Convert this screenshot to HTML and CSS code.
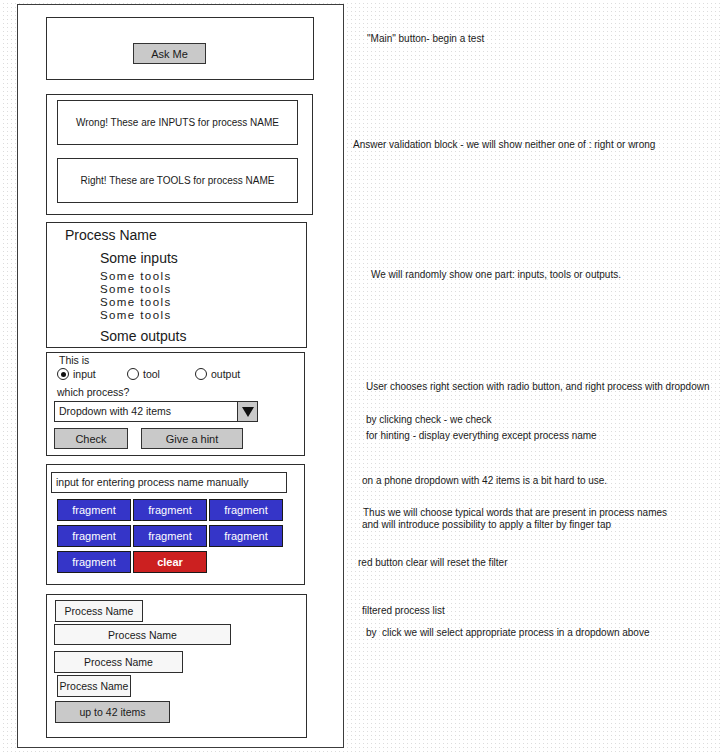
FILE: index.html
```html
<!DOCTYPE html>
<html>
<head>
<meta charset="utf-8">
<link rel="stylesheet" href="styles.css">
</head>
<body>
<div class="page">
  <div class="frame">
    <section class="box b1">
      <button class="btn gray ask">Ask Me</button>
    </section>

    <section class="box b2">
      <div class="msg">Wrong! These are INPUTS for process NAME</div>
      <div class="msg">Right! These are TOOLS for process NAME</div>
    </section>

    <section class="box b3">
      <div class="pname">Process Name</div>
      <div class="some s-in">Some inputs</div>
      <div class="some tools">Some tools<br>Some tools<br>Some tools<br>Some tools</div>
      <div class="some s-out">Some outputs</div>
    </section>

    <section class="box b4">
      <div class="this">This is</div>
      <div class="radios">
        <label class="radio r1"><span class="dot on"></span>input</label>
        <label class="radio r2"><span class="dot"></span>tool</label>
        <label class="radio"><span class="dot"></span>output</label>
      </div>
      <div class="which">which process?</div>
      <div class="select">
        <span class="sel-text">Dropdown with 42 items</span>
        <span class="sel-arrow"><svg width="12" height="10" viewBox="0 0 12 10"><path d="M0 0 L12 0 L6 10 Z" fill="#111"/></svg></span>
      </div>
      <div class="actions">
        <button class="btn gray check">Check</button>
        <button class="btn gray hint">Give a hint</button>
      </div>
    </section>

    <section class="box b5">
      <div class="textin">input for entering process name manually</div>
      <div class="frags">
        <button class="btn frag">fragment</button>
        <button class="btn frag">fragment</button>
        <button class="btn frag">fragment</button>
        <button class="btn frag">fragment</button>
        <button class="btn frag">fragment</button>
        <button class="btn frag">fragment</button>
        <button class="btn frag">fragment</button>
        <button class="btn clear">clear</button>
      </div>
    </section>

    <section class="box b6">
      <div class="item i1">Process Name</div>
      <div class="item i2">Process Name</div>
      <div class="item i3">Process Name</div>
      <div class="item i4">Process Name</div>
      <div class="item gray i5">up to 42 items</div>
    </section>
  </div>

  <div class="notes">
    <p class="note n1">"Main" button- begin a test</p>
    <p class="note n2">Answer validation block - we will show neither one of : right or wrong</p>
    <p class="note n3">We will randomly show one part: inputs, tools or outputs.</p>
    <p class="note n4">User chooses right section with radio button, and right process with dropdown</p>
    <p class="note n5">by clicking check - we check</p>
    <p class="note n6">for hinting - display everything except process name</p>
    <p class="note n7">on a phone dropdown with 42 items is a bit hard to use.</p>
    <p class="note n8">Thus we will choose typical words that are present in process names</p>
    <p class="note n9">and will introduce possibility to apply a filter by finger tap</p>
    <p class="note n10">red button clear will reset the filter</p>
    <p class="note n11">filtered process list</p>
    <p class="note n12">by&nbsp; click we will select appropriate process in a dropdown above</p>
  </div>
</div>
</body>
</html>
```

FILE: styles.css
```css
* { box-sizing: border-box; }
html, body {
  margin: 0;
  width: 720px;
  height: 753px;
  overflow: hidden;
}
body {
  font-family: "Liberation Sans", Arial, sans-serif;
  color: #1a1a1a;
  font-size: 11px;
  background-color: #dcdcdc;
  background-image:
    linear-gradient(90deg, #fff 0 3px, transparent 3px),
    linear-gradient(#fff 0 3px, transparent 3px);
  background-size: 4px 4px;
}
.page {
  display: flex;
  align-items: flex-start;
}
.frame {
  margin: 4px 0 0 17px;
  width: 327px;
  height: 744px;
  border: 1px solid #3c3c3c;
  background: #fff;
  display: flex;
  flex-direction: column;
  padding-left: 28px;
}
.box {
  border: 1px solid #2e2e2e;
  background: #fff;
}
.btn {
  font: inherit;
  color: #1a1a1a;
  border: 1px solid #333;
  padding: 0;
  display: flex;
  align-items: center;
  justify-content: center;
}
.gray { background: #c9c9c9; }

/* box 1 */
.b1 { margin-top: 12px; width: 268px; height: 63px; padding: 25px 0 0 86px; }
.ask { width: 73px; height: 21px; font-size: 11px; }

/* box 2 */
.b2 { margin-top: 14px; width: 267px; height: 121px; padding: 5px 0 0 10px; display: flex; flex-direction: column; gap: 13px; }
.msg {
  width: 241px; height: 45px;
  border: 1px solid #2e2e2e;
  display: flex; align-items: center; justify-content: center;
  font-size: 10px;
}

/* box 3 */
.b3 { margin-top: 7px; width: 261px; height: 126px; }
.pname { margin-top: 3px; padding-left: 18px; line-height: 18px; font-size: 14px; }
.some { padding-left: 53px; font-size: 14px; }
.s-in { margin-top: 5px; line-height: 18px; }
.tools { margin-top: 3px; line-height: 13px; font-size: 11.5px; letter-spacing: 1.4px; }
.s-out { margin-top: 5px; line-height: 18px; }

/* box 4 */
.b4 { margin-top: 4px; width: 259px; height: 104px; padding: 1px 0 0 7px; }
.this { padding-left: 5px; line-height: 13px; font-size: 10.5px; }
.radios { display: flex; align-items: center; height: 14px; padding-left: 3px; font-size: 10.5px; }
.radio { display: flex; align-items: center; gap: 4px; }
.r1 { width: 70px; }
.r2 { width: 68px; }
.dot {
  width: 12px; height: 12px;
  border: 1.5px solid #222;
  border-radius: 50%;
  display: flex; align-items: center; justify-content: center;
}
.dot.on::after {
  content: "";
  width: 5px; height: 5px;
  border-radius: 50%;
  background: #111;
}
.which { margin-top: 4px; padding-left: 3px; line-height: 14px; font-size: 10.5px; }
.select {
  margin-top: 2px;
  width: 204px; height: 21px;
  border: 1px solid #2e2e2e;
  display: flex;
}
.sel-text { flex: 1; padding-left: 4px; line-height: 19px; font-size: 10.5px; }
.sel-arrow {
  width: 20px;
  background: #c9c9c9;
  border-left: 1px solid #2e2e2e;
  display: flex; align-items: center; justify-content: center;
}
.actions { margin-top: 6px; display: flex; gap: 13px; }
.check { width: 74px; height: 21px; }
.hint { width: 102px; height: 21px; }

/* box 5 */
.b5 { margin-top: 8px; width: 259px; height: 121px; padding: 7px 0 0 4px; }
.textin {
  width: 236px; height: 21px;
  border: 1px solid #2e2e2e;
  padding-left: 4px;
  line-height: 19px;
  font-size: 10.5px;
}
.frags {
  margin: 6px 0 0 6px;
  display: grid;
  grid-template-columns: repeat(3, 74px);
  column-gap: 2px;
  row-gap: 4px;
}
.frag, .clear { height: 22px; color: #fff; font-size: 11px; border-color: #1a1a1a; }
.frag { background: #3535c8; }
.clear { background: #cc2020; font-weight: bold; }

/* box 6 */
.b6 { margin-top: 9px; width: 261px; height: 144px; padding-left: 7px; display: flex; flex-direction: column; align-items: flex-start; }
.item {
  border: 1px solid #2e2e2e;
  background: #f7f7f7;
  display: flex; align-items: center; justify-content: center;
  font-size: 10.5px;
}
.item.gray { background: #c9c9c9; }
.i1 { margin: 5px 0 0 1px; width: 88px; height: 22px; }
.i2 { margin-top: 2px; width: 177px; height: 21px; }
.i3 { margin-top: 6px; width: 129px; height: 22px; }
.i4 { margin: 2px 0 0 3px; width: 74px; height: 22px; }
.i5 { margin: 4px 0 0 1px; width: 115px; height: 22px; }

/* notes */
.notes { flex: 1; display: flex; flex-direction: column; }
.note { margin: 0; line-height: 12px; font-size: 10px; white-space: nowrap; }
.n1 { margin-top: 33px; padding-left: 23px; }
.n2 { margin-top: 94px; padding-left: 9px; }
.n3 { margin-top: 118px; padding-left: 27px; }
.n4 { margin-top: 100px; padding-left: 22px; }
.n5 { margin-top: 21px; padding-left: 22px; }
.n6 { margin-top: 4px; padding-left: 22px; }
.n7 { margin-top: 33px; padding-left: 18px; }
.n8 { margin-top: 20px; padding-left: 19px; }
.n9 { margin-top: 0; padding-left: 18px; }
.n10 { margin-top: 26px; padding-left: 14px; }
.n11 { margin-top: 36px; padding-left: 18px; }
.n12 { margin-top: 10px; padding-left: 22px; }
```
